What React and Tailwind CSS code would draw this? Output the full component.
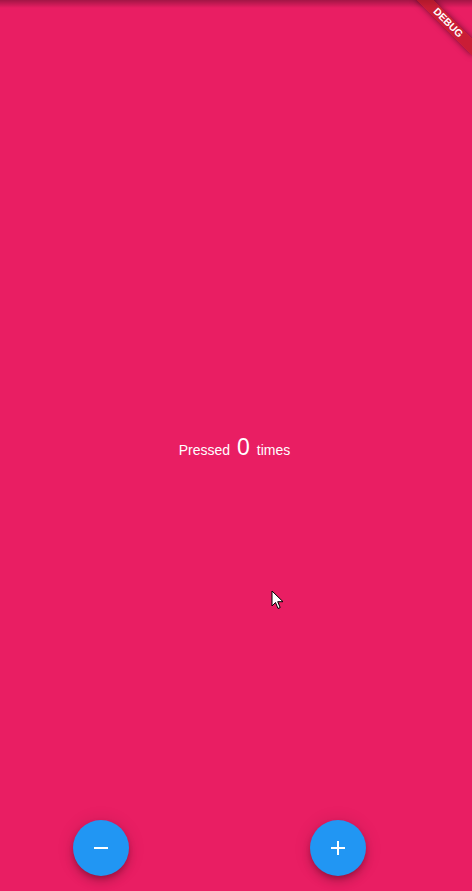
import React, { useState } from 'react';

const fabShadow =
  'shadow-[0_3px_5px_-1px_rgba(0,0,0,0.2),0_6px_10px_0_rgba(0,0,0,0.14),0_1px_18px_0_rgba(0,0,0,0.12)]';

function App() {
  const [count, setCount] = useState(0);

  return (
    <div
      className="relative h-[891px] w-full overflow-hidden bg-[#e91e63] text-white"
      style={{ fontFamily: '"Liberation Sans", Arial, sans-serif' }}
    >
      {/* Status bar shadow */}
      <div className="absolute left-0 right-0 top-0 h-[8px] bg-gradient-to-b from-black/30 to-transparent"></div>

      {/* Counter */}
      <div className="flex h-full items-center justify-center pr-[3px] pt-[4px]">
        <div className="flex items-baseline leading-[normal]">
          <span className="text-[14px]">Pressed</span>
          <span className="ml-[7px] text-[23px]">{count}</span>
          <span className="ml-[7px] text-[14px]">times</span>
        </div>
      </div>

      {/* Buttons */}
      <div className="absolute bottom-[15px] left-0 flex gap-[181px] pl-[73px]">
        <button
          onClick={() => setCount(count - 1)}
          className={`flex h-[56px] w-[56px] items-center justify-center rounded-full bg-[#2196f3] ${fabShadow}`}
        >
          <svg width="24" height="24" viewBox="0 0 24 24" fill="white">
            <path d="M19 13H5v-2h14v2z" />
          </svg>
        </button>
        <button
          onClick={() => setCount(count + 1)}
          className={`flex h-[56px] w-[56px] items-center justify-center rounded-full bg-[#2196f3] ${fabShadow}`}
        >
          <svg width="24" height="24" viewBox="0 0 24 24" fill="white">
            <path d="M19 13h-6v6h-2v-6H5v-2h6V5h2v6h6v2z" />
          </svg>
        </button>
      </div>

      {/* Mouse cursor */}
      <svg className="absolute left-[271px] top-[590px]" width="14" height="20" viewBox="0 0 14 20">
        <path d="M1 1v15l3.5-3.5 2.5 6 2.2-1-2.5-5.8H12z" fill="white" stroke="black" strokeWidth="1" strokeLinejoin="round" />
      </svg>

      {/* Debug banner */}
      <div className="absolute left-[408px] top-[17px] flex h-[12px] w-[80px] rotate-45 items-center justify-center bg-[#b71c1c]/[0.63] shadow-[0_0_6px_rgba(0,0,0,0.5)]">
        <span className="text-[10.2px] font-black leading-none tracking-normal">DEBUG</span>
      </div>
    </div>
  );
}

export default App;
